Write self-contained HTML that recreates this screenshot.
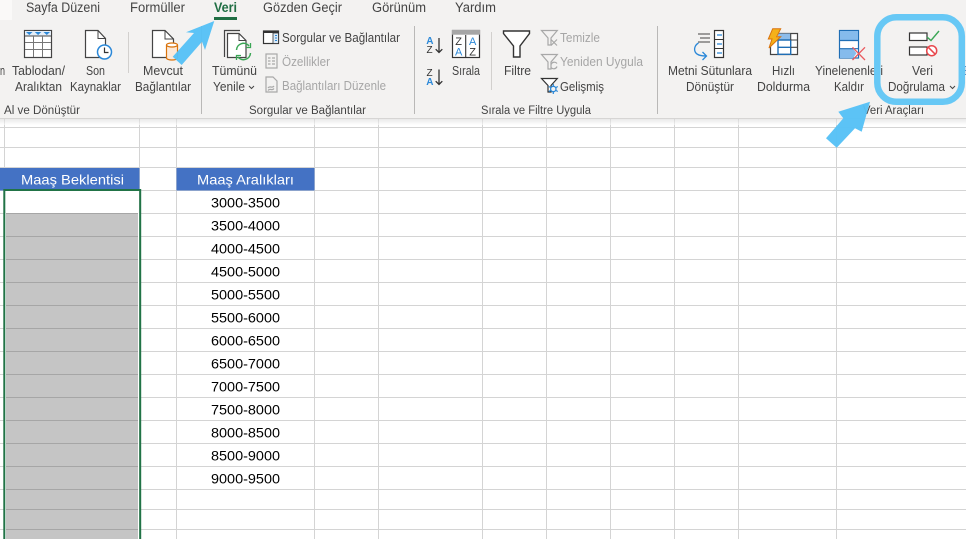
<!DOCTYPE html>
<html lang="tr"><head><meta charset="utf-8"><title>Veri Doğrulama</title>
<style>
html,body{margin:0;padding:0;background:#fff;width:966px;height:539px;overflow:hidden}
svg{display:block;font-family:"Liberation Sans",sans-serif}
.t{font-size:13.5px;fill:#444}
.r{font-size:12.5px;fill:#444}
.g{font-size:12.5px;fill:#a6a6a6}
.l{font-size:11.5px;fill:#444}
.h{font-size:14px;fill:#fff}
.n{font-size:14px;fill:#000}
.ln{stroke:#d4d4d4;stroke-width:1;shape-rendering:crispEdges}
.sep{stroke:#b9b8b7;stroke-width:1;shape-rendering:crispEdges}
.sep2{stroke:#d2d0ce;stroke-width:1;shape-rendering:crispEdges}
.d{fill:none;stroke:#333;stroke-width:1.3}
.gi{fill:none;stroke:#a8a8a8;stroke-width:1.2}
</style></head><body>
<svg width="966" height="539" viewBox="0 0 966 539" xmlns="http://www.w3.org/2000/svg">
<defs><linearGradient id="sh" x1="0" y1="0" x2="0" y2="1"><stop offset="0" stop-color="#d8d8d8"/><stop offset="1" stop-color="#fff"/></linearGradient></defs>
<rect width="966" height="539" fill="#fff"/>

<!-- grid -->
<g class="ln">
<path d="M4.5 119V539M139.5 119V539M176.5 119V539M314.5 119V539M378.5 119V539M482.5 119V539M546.5 119V539M610.5 119V539M674.5 119V539M738.5 119V539M836.5 119V539"/>
<path d="M0 127.5H966M0 147.5H966M0 167.5H966M0 190.5H966M0 213.5H966M0 236.5H966M0 259.5H966M0 282.5H966M0 305.5H966M0 328.5H966M0 351.5H966M0 374.5H966M0 397.5H966M0 420.5H966M0 443.5H966M0 466.5H966M0 489.5H966M0 509.5H966M0 529.5H966"/>
</g>

<!-- ribbon -->
<rect x="0" y="0" width="966" height="118" fill="#f3f2f1"/>
<rect x="0" y="118" width="966" height="1" fill="#d6d5d4"/>
<rect x="0" y="119" width="966" height="6" fill="url(#sh)" opacity=".55"/>
<rect x="0" y="0" width="12" height="20" fill="#faf9f8"/>

<!-- tabs -->
<text class="t" x="26" y="12" textLength="74" lengthAdjust="spacingAndGlyphs">Sayfa Düzeni</text>
<text class="t" x="130" y="12" textLength="55" lengthAdjust="spacingAndGlyphs">Formüller</text>
<text class="t" x="214" y="12" textLength="23" lengthAdjust="spacingAndGlyphs" style="fill:#1f6e43;font-weight:bold">Veri</text>
<rect x="214" y="17" width="23" height="3" fill="#1f6e43"/>
<text class="t" x="263" y="12" textLength="79" lengthAdjust="spacingAndGlyphs">Gözden Geçir</text>
<text class="t" x="372" y="12" textLength="54" lengthAdjust="spacingAndGlyphs">Görünüm</text>
<text class="t" x="455" y="12" textLength="41" lengthAdjust="spacingAndGlyphs">Yardım</text>

<!-- separators -->
<path class="sep2" d="M128.5 32V73M491.5 32V90"/>
<path class="sep" d="M201.5 26V114M414.5 26V114M657.5 26V114"/>

<!-- ribbon labels -->
<text class="r" x="0" y="75" textLength="5" lengthAdjust="spacingAndGlyphs">n</text>
<text class="r" x="12" y="75" textLength="53" lengthAdjust="spacingAndGlyphs">Tablodan/</text>
<text class="r" x="15" y="91" textLength="47" lengthAdjust="spacingAndGlyphs">Aralıktan</text>
<text class="r" x="86" y="75" textLength="19" lengthAdjust="spacingAndGlyphs">Son</text>
<text class="r" x="70" y="91" textLength="51" lengthAdjust="spacingAndGlyphs">Kaynaklar</text>
<text class="r" x="143" y="75" textLength="40" lengthAdjust="spacingAndGlyphs">Mevcut</text>
<text class="r" x="135" y="91" textLength="56" lengthAdjust="spacingAndGlyphs">Bağlantılar</text>
<text class="r" x="212" y="75" textLength="45" lengthAdjust="spacingAndGlyphs">Tümünü</text>
<text class="r" x="213" y="91" textLength="32" lengthAdjust="spacingAndGlyphs">Yenile</text>
<path d="M249 86l2.500 2.500 2.500-2.500" fill="none" stroke="#444" stroke-width="1"/>
<text class="r" x="282" y="42" textLength="118" lengthAdjust="spacingAndGlyphs">Sorgular ve Bağlantılar</text>
<text class="g" x="282" y="66" textLength="48" lengthAdjust="spacingAndGlyphs">Özellikler</text>
<text class="g" x="282" y="90" textLength="104" lengthAdjust="spacingAndGlyphs">Bağlantıları Düzenle</text>
<text class="r" x="452" y="75" textLength="28" lengthAdjust="spacingAndGlyphs">Sırala</text>
<text class="r" x="504" y="75" textLength="27" lengthAdjust="spacingAndGlyphs">Filtre</text>
<text class="g" x="560" y="42" textLength="40" lengthAdjust="spacingAndGlyphs">Temizle</text>
<text class="g" x="560" y="66" textLength="83" lengthAdjust="spacingAndGlyphs">Yeniden Uygula</text>
<text class="r" x="560" y="91" textLength="44" lengthAdjust="spacingAndGlyphs">Gelişmiş</text>
<text class="r" x="668" y="75" textLength="84" lengthAdjust="spacingAndGlyphs">Metni Sütunlara</text>
<text class="r" x="686" y="91" textLength="48" lengthAdjust="spacingAndGlyphs">Dönüştür</text>
<text class="r" x="772" y="75" textLength="23" lengthAdjust="spacingAndGlyphs">Hızlı</text>
<text class="r" x="757" y="91" textLength="53" lengthAdjust="spacingAndGlyphs">Doldurma</text>
<text class="r" x="815" y="75" textLength="68" lengthAdjust="spacingAndGlyphs">Yinelenenleri</text>
<text class="r" x="834" y="91" textLength="30" lengthAdjust="spacingAndGlyphs">Kaldır</text>
<text class="r" x="912" y="75" textLength="21" lengthAdjust="spacingAndGlyphs">Veri</text>
<text class="r" x="888" y="91" textLength="57" lengthAdjust="spacingAndGlyphs">Doğrulama</text>
<path d="M950 86l2.500 2.500 2.500-2.500" fill="none" stroke="#444" stroke-width="1"/>
<text class="r" x="963" y="75" style="fill:#5a8fc4">E</text>

<!-- group labels -->
<text class="l" x="4" y="114" textLength="76" lengthAdjust="spacingAndGlyphs">Al ve Dönüştür</text>
<text class="l" x="249" y="114" textLength="117" lengthAdjust="spacingAndGlyphs">Sorgular ve Bağlantılar</text>
<text class="l" x="481" y="114" textLength="110" lengthAdjust="spacingAndGlyphs">Sırala ve Filtre Uygula</text>
<text class="l" x="863" y="114" textLength="61" lengthAdjust="spacingAndGlyphs">Veri Araçları</text>

<!-- Tablodan icon -->
<rect x="24.500" y="30.500" width="27" height="27" fill="#fff" stroke="#444" stroke-width="1.200"/>
<rect x="25" y="31" width="26" height="5" fill="#e4eef8"/>
<path d="M25 36H51" stroke="#444"/>
<path d="M33.500 36V57M42.500 36V57M25 42.500H51M25 49.500H51" stroke="#777" fill="none"/>
<path d="M26 32h6.500l-3.200 3zM34.800 32h6.500l-3.200 3zM43.500 32h6.500l-3.200 3z" fill="#2b88d8"/>
<!-- Son icon -->
<path d="M85.500 30.500H98l7.500 8V57.500H85.500Z" fill="#fff" stroke="#444" stroke-width="1.200"/>
<path d="M98 30.500V38.500H105.500" fill="none" stroke="#444"/>
<circle cx="104.500" cy="52" r="7" fill="#fff" stroke="#2b88d8" stroke-width="1.500"/>
<path d="M104.500 47.500V52.500H108.500" fill="none" stroke="#333" stroke-width="1.200"/>
<!-- Mevcut icon -->
<path d="M152.500 30.500H165l8.500 8.500V57.500H152.500Z" fill="#fff" stroke="#444" stroke-width="1.200"/>
<path d="M165 30.500V39H173.500" fill="none" stroke="#444"/>
<path d="M166.500 45V58a5.500 2 0 0 0 11 0V45" fill="#fbe9d9" stroke="#d9730d" stroke-width="1.200"/>
<ellipse cx="172" cy="45" rx="5.500" ry="2" fill="#fff" stroke="#d9730d" stroke-width="1.200"/>
<!-- Tümünü icon -->
<path d="M224.500 57V30.500H240" fill="none" stroke="#444" stroke-width="1.200"/>
<path d="M227.500 33.500H239l7 7V57.500H227.500Z" fill="#fff" stroke="#444" stroke-width="1.200"/>
<path d="M239 33.500V40.500H246" fill="none" stroke="#444"/>
<path d="M236.500 50a7 7 0 0 1 12.500-4" fill="none" stroke="#3aa655" stroke-width="1.500"/>
<path d="M250.500 53a7 7 0 0 1-12.500 4" fill="none" stroke="#3aa655" stroke-width="1.500"/>
<path d="M250.500 43v4.500H246M236.500 60v-4.500H241" fill="none" stroke="#3aa655" stroke-width="1.300"/>
<!-- Sorgular small -->
<rect x="263.500" y="31" width="15" height="12.500" fill="#fff" stroke="#333" stroke-width="1.200"/>
<rect x="263.500" y="31" width="15" height="2" fill="#333"/>
<rect x="273" y="33" width="5.500" height="10.500" fill="#dbe9f6" stroke="#333" stroke-width=".8"/>
<path d="M275 35.500h2M275 38h2M275 40.500h2" stroke="#2b88d8"/>
<!-- Özellikler small -->
<rect x="266" y="54" width="11" height="14" class="gi"/>
<path d="M268 58h2.500M272 58h3M268 61h2.500M272 61h3M268 64h2.500M272 64h3" class="gi"/>
<!-- Bağlantı düzenle small -->
<path d="M266 77h7l4 4v11h-11z" class="gi"/>
<path d="M268 88c2-3 4 1 6-2M268 90.500c2-3 4 1 6-2" class="gi"/>

<!-- sort icons -->
<text x="426.300" y="44" style="font-size:10px;font-weight:bold;fill:#2b88d8">A</text>
<text x="426.500" y="53" style="font-size:10px;fill:#333">Z</text>
<path d="M439 38V52.500M435.700 49.200l3.300 3.300 3.300-3.300" class="d"/>
<text x="426.500" y="76" style="font-size:10px;fill:#333">Z</text>
<text x="426.300" y="85" style="font-size:10px;font-weight:bold;fill:#2b88d8">A</text>
<path d="M439 69.500V84.500M435.700 81.200l3.300 3.300 3.300-3.300" class="d"/>
<!-- Sırala -->
<rect x="452.500" y="30.500" width="27" height="27" fill="#fff" stroke="#333" stroke-width="1.200"/>
<rect x="452" y="30" width="28" height="4.700" fill="#a6a6a6"/>
<path d="M465.700 35V57" stroke="#333" stroke-width="1.100"/>
<text x="455.200" y="44.800" style="font-size:11px;fill:#333">Z</text>
<text x="455" y="55.500" style="font-size:11px;fill:#2b88d8">A</text>
<text x="469" y="44.800" style="font-size:11px;fill:#2b88d8">A</text>
<text x="469.200" y="55.500" style="font-size:11px;fill:#333">Z</text>
<!-- Filtre -->
<path d="M503.500 31H529.500V33.500L520 46V57H513.500V46L503.500 33.500Z" fill="#fff" stroke="#333" stroke-width="1.400" stroke-linejoin="miter"/>
<!-- Temizle -->
<path d="M541.500 30.500H557.300L551 38V45H548V38Z" fill="#f6f6f6" class="gi"/>
<path d="M551 39.500l6 6M557 39.500l-6 6" class="gi"/>
<!-- Yeniden -->
<path d="M541.500 54.500H557.300L551 62V69H548V62Z" fill="#f6f6f6" class="gi"/>
<path d="M551 64.500a3.500 3.500 0 0 1 6-1M557 66.500a3.500 3.500 0 0 1-6 1" class="gi"/>
<!-- Gelişmiş -->
<path d="M541.500 78.500H557.300L551 85.500V92H548V85.500Z" fill="#fff" stroke="#333" stroke-width="1.200"/>
<path d="M553.300 84v10M548.800 86.500l9 5M557.800 86.500l-9 5" stroke="#2b88d8" stroke-width="1.200"/>
<circle cx="553.300" cy="89" r="2.700" fill="#f3f2f1" stroke="#2b88d8" stroke-width="1.300"/>
<!-- Metni Sütunlara -->
<path d="M698 34H710M700 38H710M698 42H710" stroke="#444" fill="none" stroke-width="1.100"/>
<rect x="714.500" y="30.500" width="9" height="27" fill="#fff" stroke="#333" stroke-width="1.200"/>
<path d="M715 39.500H723M715 48.500H723" stroke="#333" stroke-width="1.100"/>
<path d="M717 35h5M717 44h5M717 53h5" stroke="#2b88d8" stroke-width="1.200"/>
<path d="M698.500 43c-3.500 2-5 6-3 9.500c2 3 6 3.500 11 3.500M702.500 52l4 4-4 4" fill="none" stroke="#2b88d8" stroke-width="1.300"/>
<!-- Hızlı Doldurma -->
<path d="M770.500 44V54.500H797.500V33.500H778" fill="#fff" stroke="#444" stroke-width="1.200"/>
<path d="M778 33.500H790.700V40H778Z" fill="#8cbcea"/>
<path d="M778 40H790.700V54.300H778ZM778 47.300H790.700" fill="none" stroke="#1f6eb5" stroke-width="1.400"/>
<path d="M790.700 33.500V40M790.700 40H797.500M790.700 47.300H797.500" stroke="#444" stroke-width="1.100"/>
<path d="M772.700 28.700H780.700L776.700 36.700H780.700L769 48L772 39H768.300Z" fill="#f5b11a" stroke="#d9730d" stroke-width="1"/>
<!-- Yinelenenleri -->
<rect x="839.500" y="30.500" width="19" height="27.500" fill="#fff" stroke="#1f6eb5" stroke-width="1.200"/>
<rect x="840" y="31" width="18" height="9.500" fill="#85bbec"/>
<path d="M840 48.700H853L856.500 53.300L853 58H840Z" fill="#85bbec"/>
<path d="M840 40.500H859M840 48.700H859" stroke="#1f6eb5" stroke-width="1.200"/>
<path d="M852.500 47.300L865 60M865 47.300L852.500 60" stroke="#ea5a5e" stroke-width="1.300" fill="none"/>
<!-- Veri Doğrulama -->
<rect x="909.500" y="33" width="17.500" height="7.500" fill="#fff" stroke="#333" stroke-width="1.200"/>
<rect x="909.500" y="47" width="17.500" height="8" fill="#fff" stroke="#333" stroke-width="1.200"/>
<path d="M927 37L931 40.500L939 31" fill="none" stroke="#3aa655" stroke-width="1.400"/>
<circle cx="931.700" cy="50.700" r="5" fill="#fff" stroke="#e8474c" stroke-width="1.500"/>
<path d="M928.200 47.200L935.200 54.200" stroke="#e8474c" stroke-width="1.500"/>

<!-- header cells -->
<rect x="0" y="168" width="139.500" height="22.500" fill="#4472c4"/>
<rect x="176.500" y="168" width="138" height="22.500" fill="#4472c4"/>
<text class="h" x="21" y="184.500" textLength="103" lengthAdjust="spacingAndGlyphs">Maaş Beklentisi</text>
<text class="h" x="197" y="184.500" textLength="97" lengthAdjust="spacingAndGlyphs">Maaş Aralıkları</text>

<!-- numbers -->
<g class="n">
<text x="211" y="207.500" textLength="69" lengthAdjust="spacingAndGlyphs">3000-3500</text>
<text x="211" y="230.500" textLength="69" lengthAdjust="spacingAndGlyphs">3500-4000</text>
<text x="211" y="253.500" textLength="69" lengthAdjust="spacingAndGlyphs">4000-4500</text>
<text x="211" y="276.500" textLength="69" lengthAdjust="spacingAndGlyphs">4500-5000</text>
<text x="211" y="299.500" textLength="69" lengthAdjust="spacingAndGlyphs">5000-5500</text>
<text x="211" y="322.500" textLength="69" lengthAdjust="spacingAndGlyphs">5500-6000</text>
<text x="211" y="345.500" textLength="69" lengthAdjust="spacingAndGlyphs">6000-6500</text>
<text x="211" y="368.500" textLength="69" lengthAdjust="spacingAndGlyphs">6500-7000</text>
<text x="211" y="391.500" textLength="69" lengthAdjust="spacingAndGlyphs">7000-7500</text>
<text x="211" y="414.500" textLength="69" lengthAdjust="spacingAndGlyphs">7500-8000</text>
<text x="211" y="437.500" textLength="69" lengthAdjust="spacingAndGlyphs">8000-8500</text>
<text x="211" y="460.500" textLength="69" lengthAdjust="spacingAndGlyphs">8500-9000</text>
<text x="211" y="483.500" textLength="69" lengthAdjust="spacingAndGlyphs">9000-9500</text>
</g>

<!-- selection -->
<rect x="5" y="191" width="134" height="348" fill="#fff"/>
<rect x="6" y="213" width="132" height="326" fill="#c5c5c5"/>
<path d="M6 213.500H138M6 236.500H138M6 259.500H138M6 282.500H138M6 305.500H138M6 328.500H138M6 351.500H138M6 374.500H138M6 397.500H138M6 420.500H138M6 443.500H138M6 466.500H138M6 489.500H138M6 509.500H138M6 529.500H138" stroke="#a6a6a6" shape-rendering="crispEdges"/>
<path d="M4.300 539V190H140.200V539" fill="none" stroke="#217346" stroke-width="2"/>

<!-- annotations -->
<polygon points="214.300,21 186,32.300 194,33 172.700,56.700 181.700,65 202,41.700 205,50" fill="#55c1f6" opacity=".96"/>
<polygon points="870,101.700 838.300,111.700 843.300,118.300 826,138.300 836.700,147.700 855,128.300 861.700,131.700" fill="#55c1f6" opacity=".96"/>
<rect x="877.300" y="17.300" width="84.500" height="84.500" rx="19" ry="19" fill="none" stroke="#67c8f5" stroke-width="6.500"/>
</svg>
</body></html>
